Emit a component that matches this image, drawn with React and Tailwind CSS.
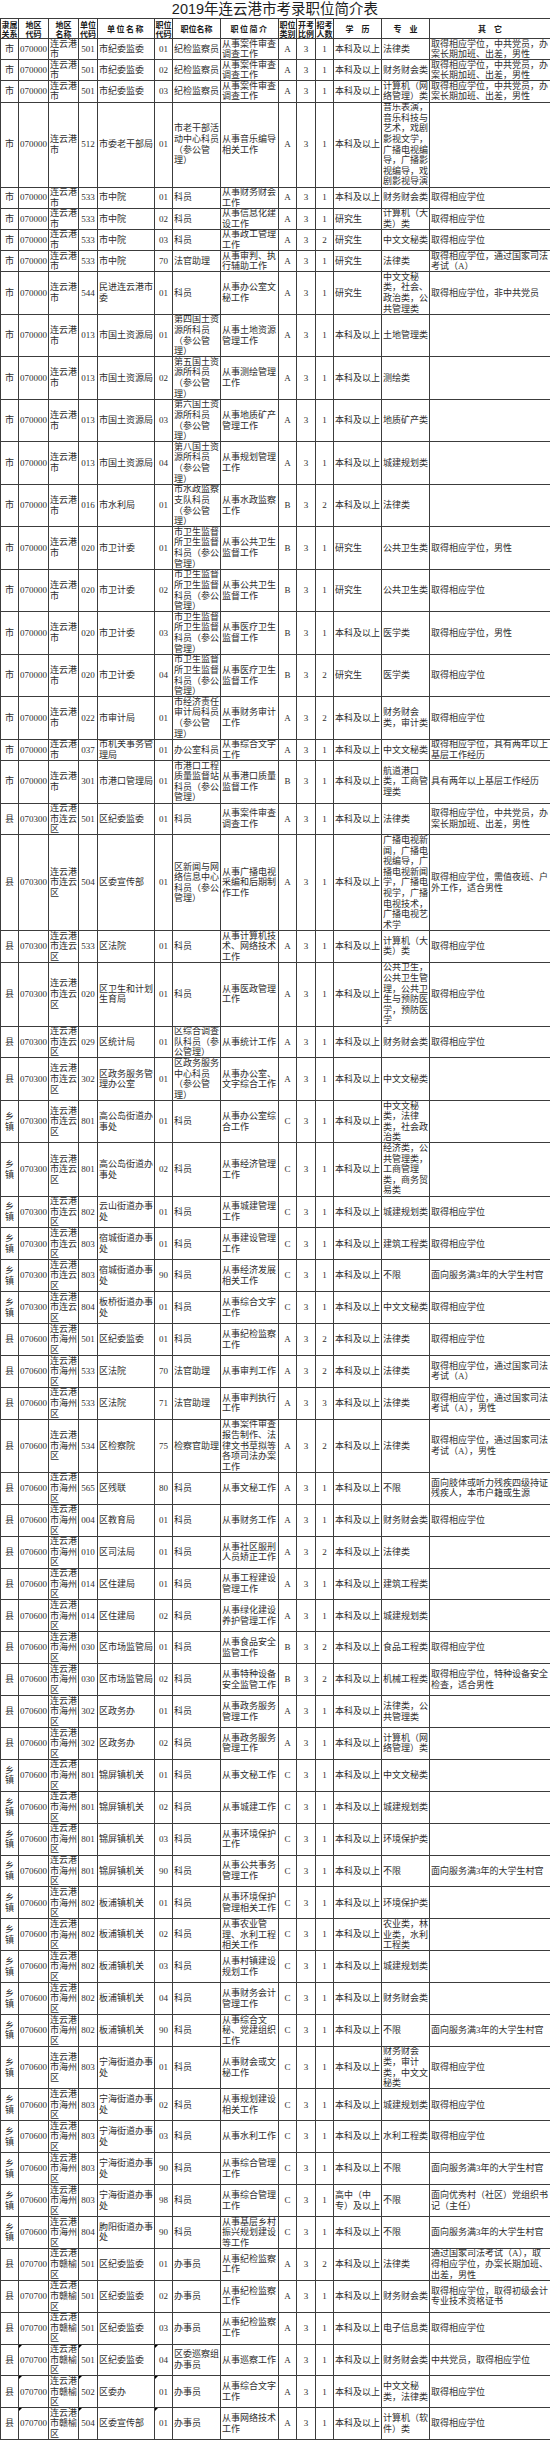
import React from "react";

const L = "连云港市";
const LY = "连云港市连云区";
const HZ = "连云港市海州区";
const GY = "连云港市赣榆区";

const mk = (rel, code, area) => (n, uc, un, pc, pn, desc, cat, num, edu, major, other = "", tri = false) => ({
  n,
  tri,
  cells: [rel, code, area, uc, un, pc, pn, desc, cat, "3", num, edu, major, other],
});

const S = mk("市", "070000", L);
const LX = mk("县", "070300", LY);
const LZ = mk("乡镇", "070300", LY);
const HX = mk("县", "070600", HZ);
const HZZ = mk("乡镇", "070600", HZ);
const GX = mk("县", "070700", GY);

const JJ = "取得相应学位，中共党员，办案长期加班、出差，男性";
const WS = "市卫生监督所卫生监督科员（参公管理）";
const CG = "面向服务满3年的大学生村官";
const BK = "本科及以上";
const XW = "取得相应学位";

const rows = [
  S(2, "501", "市纪委监委", "01", "纪检监察员", "从事案件审查调查工作", "A", "1", BK, "法律类", JJ),
  S(2, "501", "市纪委监委", "02", "纪检监察员", "从事案件审查调查工作", "A", "1", BK, "财务财会类", JJ),
  S(2, "501", "市纪委监委", "03", "纪检监察员", "从事案件审查调查工作", "A", "1", BK, "计算机（网络管理）类", JJ),
  S(8, "512", "市委老干部局", "01", "市老干部活动中心科员（参公管理）", "从事音乐编导相关工作", "A", "1", BK, "音乐表演，音乐科技与艺术，戏剧影视文学，广播电视编导，广播影视编导，戏剧影视导演"),
  S(2, "533", "市中院", "01", "科员", "从事财务财会工作", "A", "1", BK, "财务财会类", XW),
  S(2, "533", "市中院", "02", "科员", "从事信息化建设工作", "A", "1", "研究生", "计算机（大类）类", XW),
  S(2, "533", "市中院", "03", "科员", "从事政工管理工作", "A", "2", "研究生", "中文文秘类", XW),
  S(2, "533", "市中院", "70", "法官助理", "从事审判、执行辅助工作", "A", "1", "研究生", "法律类", "取得相应学位，通过国家司法考试（A）"),
  S(4, "544", "民进连云港市委", "01", "科员", "从事办公室文秘工作", "A", "1", "研究生", "中文文秘类，社会、政治类，公共管理类", "取得相应学位，非中共党员"),
  S(4, "013", "市国土资源局", "01", "第四国土资源所科员（参公管理）", "从事土地资源管理工作", "A", "1", BK, "土地管理类"),
  S(4, "013", "市国土资源局", "02", "第五国土资源所科员（参公管理）", "从事测绘管理工作", "A", "1", BK, "测绘类"),
  S(4, "013", "市国土资源局", "03", "第六国土资源所科员（参公管理）", "从事地质矿产管理工作", "A", "1", BK, "地质矿产类"),
  S(4, "013", "市国土资源局", "04", "第八国土资源所科员（参公管理）", "从事规划管理工作", "A", "1", BK, "城建规划类"),
  S(4, "016", "市水利局", "01", "市水政监察支队科员（参公管理）", "从事水政监察工作", "B", "2", BK, "法律类"),
  S(4, "020", "市卫计委", "01", WS, "从事公共卫生监督工作", "B", "1", "研究生", "公共卫生类", "取得相应学位，男性"),
  S(4, "020", "市卫计委", "02", WS, "从事公共卫生监督工作", "B", "1", "研究生", "公共卫生类", XW),
  S(4, "020", "市卫计委", "03", WS, "从事医疗卫生监督工作", "B", "1", BK, "医学类", "取得相应学位，男性"),
  S(4, "020", "市卫计委", "04", WS, "从事医疗卫生监督工作", "B", "2", "研究生", "医学类", XW),
  S(4, "022", "市审计局", "01", "市经济责任审计局科员（参公管理）", "从事财务审计工作", "A", "2", BK, "财务财会类，审计类", XW),
  S(2, "037", "市机关事务管理局", "01", "办公室科员", "从事综合文字工作", "A", "1", BK, "中文文秘类", "取得相应学位，具有两年以上基层工作经历"),
  S(4, "301", "市港口管理局", "01", "市港口工程质量监督站科员（参公管理）", "从事港口质量监督工作", "B", "1", BK, "航道港口类，工商管理类", "具有两年以上基层工作经历"),
  LX(3, "501", "区纪委监委", "01", "科员", "从事案件审查调查工作", "A", "1", BK, "法律类", JJ),
  LX(9, "504", "区委宣传部", "01", "区新闻与网络信息中心科员（参公管理）", "从事广播电视采编和后期制作工作", "A", "1", BK, "广播电视新闻，广播电视编导，广播电视新闻学，广播电视学，广播电视技术，广播电视艺术学", "取得相应学位，需值夜班、户外工作，适合男性"),
  LX(3, "533", "区法院", "01", "科员", "从事计算机技术、网络技术工作", "A", "1", BK, "计算机（大类）类", XW),
  LX(6, "020", "区卫生和计划生育局", "01", "科员", "从事医政管理工作", "A", "1", BK, "公共卫生，公共卫生管理，公共卫生与预防医学，预防医学", XW),
  LX(3, "029", "区统计局", "01", "区综合调查队科员（参公管理）", "从事统计工作", "A", "1", BK, "财务财会类", XW),
  LX(4, "302", "区政务服务管理办公室", "01", "区政务服务中心科员（参公管理）", "从事办公室、文字综合工作", "A", "1", BK, "中文文秘类"),
  LZ(4, "801", "高公岛街道办事处", "01", "科员", "从事办公室综合工作", "C", "1", BK, "中文文秘类，法律类，社会政治类"),
  LZ(5, "801", "高公岛街道办事处", "02", "科员", "从事经济管理工作", "C", "1", BK, "经济类，公共管理类，工商管理类，商务贸易类"),
  LZ(3, "802", "云山街道办事处", "01", "科员", "从事城建管理工作", "C", "1", BK, "城建规划类", XW),
  LZ(3, "803", "宿城街道办事处", "01", "科员", "从事建设管理工作", "C", "1", BK, "建筑工程类", XW),
  LZ(3, "803", "宿城街道办事处", "90", "科员", "从事经济发展相关工作", "C", "1", BK, "不限", CG),
  LZ(3, "804", "板桥街道办事处", "01", "科员", "从事综合文字工作", "C", "1", BK, "中文文秘类", XW),
  HX(3, "501", "区纪委监委", "01", "科员", "从事纪检监察工作", "A", "2", BK, "法律类", XW),
  HX(3, "533", "区法院", "70", "法官助理", "从事审判工作", "A", "2", BK, "法律类", "取得相应学位，通过国家司法考试（A）"),
  HX(3, "533", "区法院", "71", "法官助理", "从事审判执行工作", "A", "3", BK, "法律类", "取得相应学位，通过国家司法考试（A），男性"),
  HX(5, "534", "区检察院", "75", "检察官助理", "从事案件审查报告制作、法律文书草拟等各项司法办案工作", "A", "2", BK, "法律类", "取得相应学位，通过国家司法考试（A），男性"),
  HX(3, "565", "区残联", "80", "科员", "从事文秘工作", "A", "1", BK, "不限", "面向肢体或听力残疾四级持证残疾人，本市户籍或生源"),
  HX(3, "004", "区教育局", "01", "科员", "从事财务工作", "A", "1", BK, "财务财会类", XW),
  HX(3, "010", "区司法局", "01", "科员", "从事社区服刑人员矫正工作", "A", "2", BK, "法律类"),
  HX(3, "014", "区住建局", "01", "科员", "从事工程建设管理工作", "A", "1", BK, "建筑工程类"),
  HX(3, "014", "区住建局", "02", "科员", "从事绿化建设养护管理工作", "A", "1", BK, "城建规划类"),
  HX(3, "030", "区市场监管局", "01", "科员", "从事食品安全监管工作", "B", "2", BK, "食品工程类", XW),
  HX(3, "030", "区市场监管局", "02", "科员", "从事特种设备安全监管工作", "B", "2", BK, "机械工程类", "取得相应学位，特种设备安全检查，适合男性"),
  HX(3, "302", "区政务办", "01", "科员", "从事政务服务管理工作", "A", "1", BK, "法律类，公共管理类"),
  HX(3, "302", "区政务办", "02", "科员", "从事政务服务管理工作", "A", "1", BK, "计算机（网络管理）类"),
  HZZ(3, "801", "锦屏镇机关", "01", "科员", "从事文秘工作", "C", "1", BK, "中文文秘类"),
  HZZ(3, "801", "锦屏镇机关", "02", "科员", "从事城建工作", "C", "1", BK, "城建规划类"),
  HZZ(3, "801", "锦屏镇机关", "03", "科员", "从事环境保护工作", "C", "1", BK, "环境保护类"),
  HZZ(3, "801", "锦屏镇机关", "90", "科员", "从事公共事务管理工作", "C", "1", BK, "不限", CG),
  HZZ(3, "802", "板浦镇机关", "01", "科员", "从事环境保护管理相关工作", "C", "1", BK, "环境保护类"),
  HZZ(3, "802", "板浦镇机关", "02", "科员", "从事农业管理、水利工程相关工作", "C", "1", BK, "农业类，林业类，水利工程类"),
  HZZ(3, "802", "板浦镇机关", "03", "科员", "从事村镇建设规划工作", "C", "1", BK, "城建规划类"),
  HZZ(3, "802", "板浦镇机关", "04", "科员", "从事财务会计管理工作", "C", "1", BK, "财务财会类"),
  HZZ(3, "802", "板浦镇机关", "90", "科员", "从事综合文秘、党建组织工作", "C", "1", BK, "不限", CG),
  HZZ(4, "803", "宁海街道办事处", "01", "科员", "从事财会或文秘工作", "C", "1", BK, "财务财会类，审计类，中文文秘类", XW),
  HZZ(3, "803", "宁海街道办事处", "02", "科员", "从事规划建设相关工作", "C", "1", BK, "城建规划类", XW),
  HZZ(3, "803", "宁海街道办事处", "03", "科员", "从事水利工作", "C", "1", BK, "水利工程类", XW),
  HZZ(3, "803", "宁海街道办事处", "90", "科员", "从事综合管理工作", "C", "1", BK, "不限", CG),
  HZZ(3, "803", "宁海街道办事处", "98", "科员", "从事综合管理工作", "C", "1", "高中（中专）及以上", "不限", "面向优秀村（社区）党组织书记（主任）"),
  HZZ(3, "804", "朐阳街道办事处", "90", "科员", "从事基层乡村振兴规划建设等工作", "C", "1", BK, "不限", CG),
  GX(3, "501", "区纪委监委", "01", "办事员", "从事纪检监察工作", "A", "2", BK, "法律类", "通过国家司法考试（A），取得相应学位，办案长期加班、出差，男性"),
  GX(3, "501", "区纪委监委", "02", "办事员", "从事纪检监察工作", "A", "1", BK, "财务财会类", "取得相应学位，取得初级会计专业技术资格证书"),
  GX(3, "501", "区纪委监委", "03", "办事员", "从事纪检监察工作", "A", "1", BK, "电子信息类", XW),
  GX(3, "501", "区纪委监委", "04", "区委巡察组办事员", "从事巡察工作", "A", "1", BK, "财务财会类", "中共党员，取得相应学位", true),
  GX(3, "502", "区委办", "01", "办事员", "从事综合文字工作", "A", "1", BK, "中文文秘类，法律类", XW, true),
  GX(3, "504", "区委宣传部", "01", "办事员", "从事网络技术工作", "A", "1", BK, "计算机（软件）类", XW, true),
];

const heads = [
  "隶属\n关系", "地区\n代码", "地区\n名称", "单位\n代码", "单位名称", "职位\n代码", "职位名称",
  "职位简介", "职位\n类别", "开考\n比例", "招考\n人数", "学　历", "专　业", "其　它",
];

const widths = [
  "w-[18px]", "w-[30px]", "w-[30px]", "w-[19px]", "w-[57px]", "w-[18px]", "w-[48px]",
  "w-[58px]", "w-[18px]", "w-[19px]", "w-[18px]", "w-[48px]", "w-[48px]", "w-[121px]",
];

const align = [
  "text-center", "text-center", "text-left", "text-center", "text-left", "text-center", "text-left",
  "text-left", "text-center", "text-center", "text-center", "text-left", "text-left", "text-left",
];

const heights = {
  2: "h-[20.2px]",
  3: "h-[30.9px]",
  4: "h-[41.5px]",
  5: "h-[52.1px]",
  6: "h-[62.7px]",
  8: "h-[84px]",
  9: "h-[94.6px]",
};

// cells that carry the little comment marker in the last rows
const triCols = [1, 3, 5];

const Cell = ({ text, col, h, tri }) => (
  <td className="border border-[#3c3c3c] p-0 align-middle">
    <div className={`relative flex flex-col justify-center overflow-hidden px-[1px] ${h} ${align[col]}`}>
      {tri && triCols.includes(col) && (
        <span className="absolute left-0 top-0 h-0 w-0 border-t-[3px] border-r-[3px] border-t-black border-r-transparent" />
      )}
      <div className={col === 1 || col === 3 || col === 5 ? "whitespace-nowrap" : ""}>{text}</div>
    </div>
  </td>
);

export default function App() {
  return (
    <div className="w-[550px] bg-white text-[#2e2e2e] font-[family-name:'Liberation_Serif','Noto_Sans_CJK_SC',serif]">
      <div className="flex h-[18px] items-center justify-center text-[14.5px] leading-none text-[#1e1e1e] font-[family-name:'Liberation_Sans','Noto_Sans_CJK_SC',sans-serif]">
        2019年连云港市考录职位简介表
      </div>
      <table className="w-[550px] table-fixed border-collapse text-[9px] leading-[10.6px]">
        <colgroup>
          {widths.map((w, i) => (
            <col key={i} className={w} />
          ))}
        </colgroup>
        <thead>
          <tr>
            {heads.map((t, i) => (
              <th key={i} className="border border-[#3c3c3c] p-0 align-middle">
                <div
                  className={`flex h-[19px] flex-col justify-center whitespace-pre-line text-center text-[8px] font-bold leading-[9px] text-[#1a1a1a] font-[family-name:'Noto_Sans_CJK_SC',sans-serif] ${i === 4 || i === 7 ? "tracking-[1.5px]" : ""}`}
                >
                  {t}
                </div>
              </th>
            ))}
          </tr>
        </thead>
        <tbody>
          {rows.map((r, ri) => (
            <tr key={ri}>
              {r.cells.map((c, ci) => (
                <Cell key={ci} text={c} col={ci} h={heights[r.n]} tri={r.tri} />
              ))}
            </tr>
          ))}
        </tbody>
      </table>
    </div>
  );
}
